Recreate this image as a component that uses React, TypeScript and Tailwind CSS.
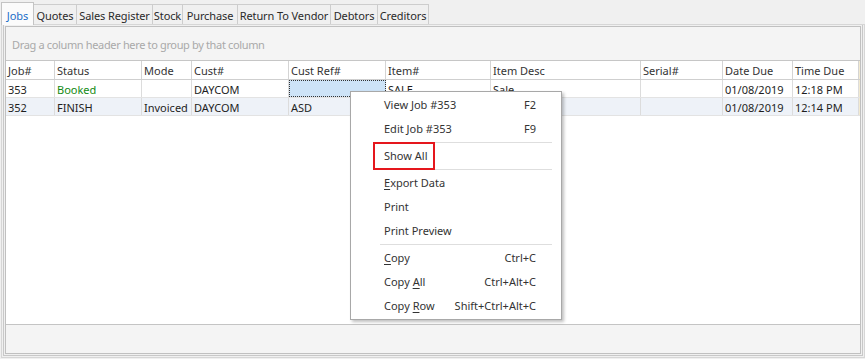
import React from "react";

const tabs = [
  { label: "Jobs", w: "w-[33px]", active: true },
  { label: "Quotes", w: "w-[44px]" },
  { label: "Sales Register", w: "w-[77px]" },
  { label: "Stock", w: "w-[31px]" },
  { label: "Purchase", w: "w-[56px]" },
  { label: "Return To Vendor", w: "w-[94px]" },
  { label: "Debtors", w: "w-[48px]" },
  { label: "Creditors", w: "w-[52px]" },
];

const cols = [
  { label: "Job#", w: "w-[49px]" },
  { label: "Status", w: "w-[87px]" },
  { label: "Mode", w: "w-[50px]" },
  { label: "Cust#", w: "w-[97px]" },
  { label: "Cust Ref#", w: "w-[97px]" },
  { label: "Item#", w: "w-[105px]" },
  { label: "Item Desc", w: "w-[150px]" },
  { label: "Serial#", w: "w-[82px]" },
  { label: "Date Due", w: "w-[70px]" },
  { label: "Time Due", w: "w-[66px]" },
];

const rows = [
  ["353", "Booked", "", "DAYCOM", "", "SALE", "Sale", "", "01/08/2019", "12:18 PM"],
  ["352", "FINISH", "Invoiced", "DAYCOM", "ASD", "SALE", "Sale", "", "01/08/2019", "12:14 PM"],
];

function U({ children }: { children: React.ReactNode }) {
  return <span className="underline underline-offset-2">{children}</span>;
}

type Item = { label: React.ReactNode; key?: string } | "sep";

const menu: Item[] = [
  { label: "View Job #353", key: "F2" },
  { label: "Edit Job #353", key: "F9" },
  "sep",
  { label: "Show All" },
  "sep",
  { label: <><U>E</U>xport Data</> },
  { label: "Print" },
  { label: "Print Preview" },
  "sep",
  { label: <><U>C</U>opy</>, key: "Ctrl+C" },
  { label: <>Copy <U>A</U>ll</>, key: "Ctrl+Alt+C" },
  { label: <>Copy <U>R</U>ow</>, key: "Shift+Ctrl+Alt+C" },
];

export default function App() {
  return (
    <div
      className="relative w-[865px] h-[359px] bg-[#f0f0f0] text-[11px] text-[#222] overflow-hidden"
      style={{ fontFamily: '"Noto Sans", "Open Sans", sans-serif' }}
    >
      {/* tab strip */}
      <div className="flex items-end h-[24px] pl-[1px]">
        {tabs.map((t) => (
          <div
            key={t.label}
            className={
              t.active
                ? `${t.w} relative z-10 h-[23px] -mb-[1px] bg-[#fbfbfb] border border-b-0 border-[#c4c4c4] text-[#1c6ec8] flex items-center justify-center pt-[4px]`
                : `${t.w} h-[20px] bg-[#f0f0f0] border border-b-0 border-[#cdcdcd] -ml-[1px] flex items-center justify-center text-[#2a2a2a] pt-[3px] tracking-[-0.1px]`
            }
          >
            {t.label}
          </div>
        ))}
      </div>

      {/* outer frames */}
      <div className="ml-[1px] w-[864px] h-[334px] border border-[#d6d6d6] px-[1px] pb-[1px]">
        <div className="h-full border-x border-b border-[#c8c8c8] pt-[1px] px-[1px] pb-[1px]">
          <div className="h-full border border-[#c0c0c0] flex flex-col bg-white">
            {/* group panel */}
            <div className="h-[34px] bg-[#f4f4f4] flex items-center pl-[6px] pt-[4px] text-[#a9a9a9] tracking-[-0.35px] border-b border-[#c6c6c6]">
              Drag a column header here to group by that column
            </div>
            {/* header */}
            <div className="flex h-[19px] border-b border-[#cfcfcf] bg-white">
              {cols.map((c) => (
                <div
                  key={c.label}
                  className={`${c.w} shrink-0 border-r border-[#d4d4d4] pl-[2px] pt-[3px] flex items-center text-[#333]`}
                >
                  {c.label}
                </div>
              ))}
              <div className="flex-1 bg-[#f3ead0]" />
            </div>
            {/* rows */}
            {rows.map((r, ri) => (
              <div
                key={ri}
                className={`flex h-[18px] border-b border-[#e3e3e3] ${ri === 1 ? "bg-[#eef2f8]" : "bg-white"}`}
              >
                {r.map((v, ci) => {
                  const selected = ri === 0 && ci === 4;
                  return (
                    <div
                      key={ci}
                      className={`${cols[ci].w} shrink-0 pl-[2px] pt-[3px] flex items-center ${
                        selected
                          ? "bg-[#cde3f7] border border-dotted border-[#333]"
                          : "border-r border-[#dcdcdc]"
                      } ${ri === 0 && ci === 1 ? "text-[#138a13]" : "text-[#1e1e1e]"}`}
                    >
                      {v}
                    </div>
                  );
                })}
                <div className="flex-1 bg-[#f3ead0]" />
              </div>
            ))}
            <div className="flex-1 bg-white" />
            <div className="h-[29px] bg-[#f4f4f4] border-t border-[#c4c4c4]" />
          </div>
        </div>
      </div>

      {/* context menu */}
      <div className="absolute left-[350px] top-[91px] w-[212px] h-[229px] bg-white border border-[#a8a8a8] shadow-[2px_2px_3px_rgba(0,0,0,0.25)] pt-[1px] text-[#333]">
        {menu.map((m, i) =>
          m === "sep" ? (
            <div key={i} className="h-[3px] flex items-center pl-[29px] pr-[9px]">
              <div className="h-px w-full bg-[#dedede]" />
            </div>
          ) : (
            <div key={i} className="h-[24px] flex items-center justify-between pl-[33px] pr-[25px]">
              <span>{m.label}</span>
              {m.key && <span>{m.key}</span>}
            </div>
          )
        )}
        <div className="absolute left-[22px] top-[50px] w-[62px] h-[28px] border-2 border-[#e5171d]" />
      </div>
    </div>
  );
}
